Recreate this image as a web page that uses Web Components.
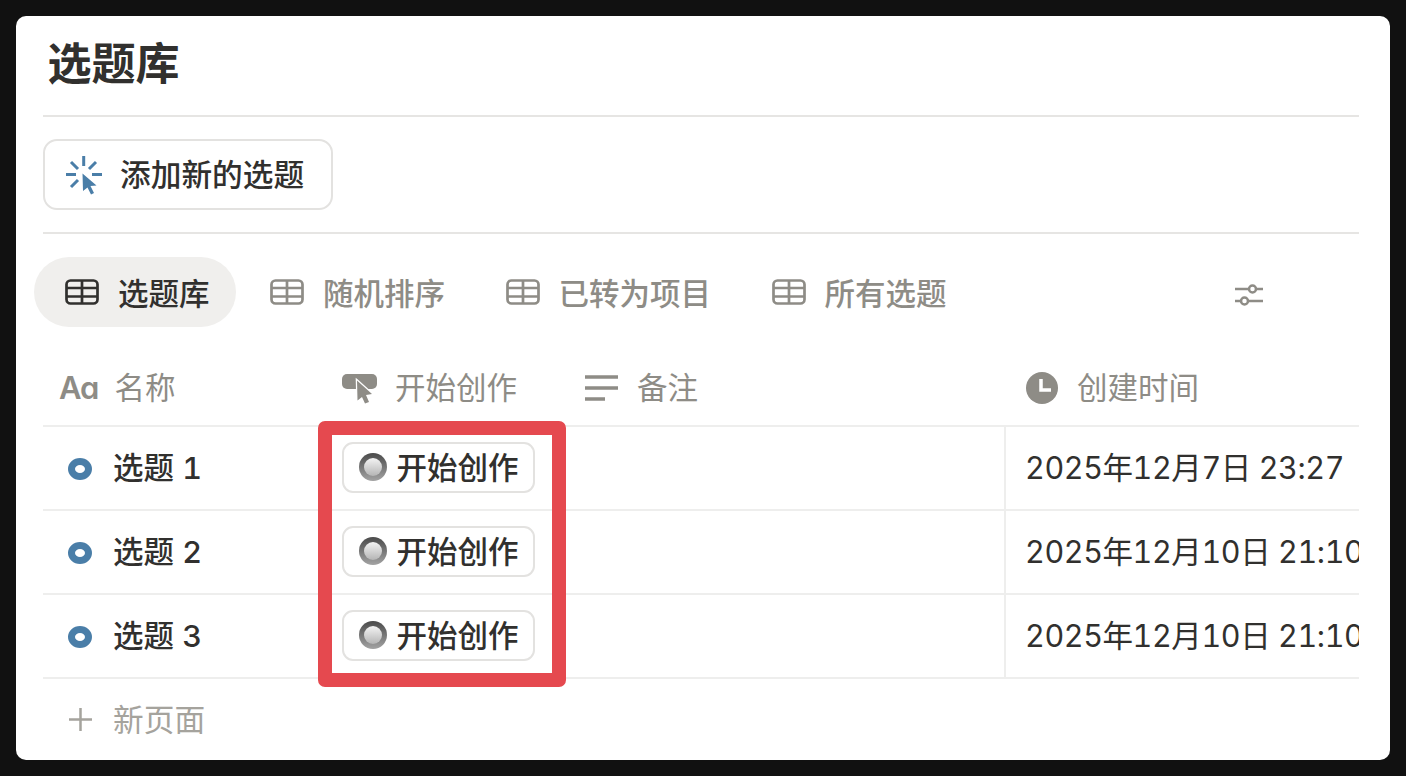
<!DOCTYPE html>
<html lang="zh-CN">
<head>
<meta charset="utf-8">
<title>选题库</title>
<style>
  html, body { margin: 0; height: 100%; background: #111111; }
  body { font-family: "Inter", "Noto Sans CJK SC", sans-serif; color: #31302e; }
</style>
</head>
<body>
<db-card>
  <db-title slot="title">选题库</db-title>
  <db-action slot="action">添加新的选题</db-action>
  <db-tabs slot="tabs"></db-tabs>
  <db-table slot="table"></db-table>
</db-card>

<script>
const GRAY = '#8e8c86';
const BLUE = '#4a7ea8';

const tableIcon = `<svg width="34" height="26" viewBox="0 0 34 26" fill="none" stroke="currentColor" stroke-width="2.700">
  <rect x="1.5" y="1.5" width="31" height="23" rx="4"/><path d="M2 9h30M2 17.500h30M17 2v22"/></svg>`;

class DbCard extends HTMLElement {
  constructor() {
    super();
    this.attachShadow({mode: 'open'});
    this.shadowRoot.innerHTML = `
      <style>
        :host { display: block; padding: 16px; height: 776px; box-sizing: border-box; }
        .card {
          height: 744px;
          box-sizing: border-box;
          background: #fff;
          border-radius: 10px;
          padding: 0 31px 0 27px;
          overflow: hidden;
        }
      </style>
      <div class="card">
        <slot name="title"></slot>
        <slot name="action"></slot>
        <slot name="tabs"></slot>
        <slot name="table"></slot>
      </div>`;
  }
}

class DbTitle extends HTMLElement {
  constructor() {
    super();
    this.attachShadow({mode: 'open'});
    this.shadowRoot.innerHTML = `
      <style>
        :host {
          display: flex;
          align-items: center;
          height: 101px;
          padding: 0 0 9px 4.5px;
          box-sizing: border-box;
          border-bottom: 2px solid #e6e5e3;
          font-size: 44px;
          font-weight: 700;
        }
      </style>
      <slot></slot>`;
  }
}

class DbAction extends HTMLElement {
  constructor() {
    super();
    this.attachShadow({mode: 'open'});
    this.shadowRoot.innerHTML = `
      <style>
        :host {
          display: block;
          padding: 22px 0;
          border-bottom: 2px solid #e6e5e3;
        }
        .btn {
          display: flex;
          align-items: center;
          gap: 17px;
          height: 71px;
          width: 290px;
          box-sizing: border-box;
          padding-left: 20px;
          border: 2px solid #e3e2e0;
          border-radius: 14px;
          font-size: 30.7px;
          font-weight: 500;
        }
        svg { flex: none; }
        .label { margin-bottom: 4px; }
      </style>
      <div class="btn">
        <svg width="38" height="40" viewBox="0 0 38 40" fill="none" stroke="${BLUE}" stroke-width="3">
          <path d="M18.700 1v10M1 19.500h10M27 19.500h10M6 7l7 7M31 7l-7 7M6 32l7-7"/>
          <path d="M17.500 18.500l14 12-6 .5 3.500 7-3 1.500-3.500-7-4.500 3.500z" fill="${BLUE}" stroke="none"/>
        </svg>
        <span class="label"><slot></slot></span>
      </div>`;
  }
}

class DbTabs extends HTMLElement {
  constructor() {
    super();
    const tabs = ['选题库', '随机排序', '已转为项目', '所有选题'];
    this.attachShadow({mode: 'open'});
    this.shadowRoot.innerHTML = `
      <style>
        :host {
          display: flex;
          align-items: center;
          justify-content: space-between;
          margin: 23px 96px 0 -9px;
          height: 70px;
          font-size: 30.5px;
          font-weight: 500;
          color: ${GRAY};
        }
        .list { display: flex; gap: 3.5px; }
        .tab {
          display: flex;
          align-items: center;
          gap: 19px;
          height: 70px;
          padding: 0 26px 0 31px;
          border-radius: 35px;
        }
        .tab.active { background: #f0efed; color: #31302e; }
        .tab span { margin-bottom: 1px; }
        svg { flex: none; }
        .tune { margin-top: 6px; }
      </style>
      <div class="list">
        ${tabs.map((t, i) => `<div class="tab ${i === 0 ? 'active' : ''}">${tableIcon}<span>${t}</span></div>`).join('')}
      </div>
      <svg class="tune" width="28" height="22" viewBox="0 0 28 22" fill="none" stroke="currentColor" stroke-width="2.500">
        <path d="M0 5h13M22 5h6M0 17h5M14 17h14"/><circle cx="17.500" cy="5" r="3.500"/><circle cx="9.500" cy="17" r="3.500"/>
      </svg>`;
  }
}

class DbChip extends HTMLElement {
  constructor() {
    super();
    this.attachShadow({mode: 'open'});
    this.shadowRoot.innerHTML = `
      <style>
        :host {
          display: inline-flex;
          align-items: center;
          gap: 9.5px;
          width: 193px;
          height: 51px;
          margin-bottom: 2px;
          box-sizing: border-box;
          padding-left: 15px;
          border: 2px solid #e3e2e0;
          border-radius: 11px;
          font-size: 30.5px;
          font-weight: 500;
        }
        .radio {
          width: 28px;
          height: 28px;
          flex: none;
          box-sizing: border-box;
          border-radius: 50%;
          border: 5px solid transparent;
          background:
            linear-gradient(#f4f4f4, #b5b5b5) padding-box,
            linear-gradient(#4a4a4a, #a3a3a3) border-box;
        }
        .label { margin-bottom: 3px; }
      </style>
      <span class="radio"></span><span class="label"><slot></slot></span>`;
  }
}

class DbTable extends HTMLElement {
  constructor() {
    super();
    const rows = [
      ['选题 1', '2025年12月7日 23:27'],
      ['选题 2', '2025年12月10日 21:10'],
      ['选题 3', '2025年12月10日 21:10'],
    ];
    this.attachShadow({mode: 'open'});
    this.shadowRoot.innerHTML = `
      <style>
        :host {
          display: block;
          position: relative;
          font-size: 30.5px;
          font-variant-numeric: tabular-nums;
          --cols: 275px 243px 443px 1fr;
        }
        .head, .row {
          display: grid;
          grid-template-columns: var(--cols);
          overflow: hidden;
        }
        .head {
          height: 100px;
          box-sizing: border-box;
          border-bottom: 2px solid #eeeeed;
          color: ${GRAY};
        }
        .hcell { display: flex; align-items: center; padding-top: 24px; gap: 17px; }
        .hcell span { margin-bottom: 4px; }
        .hcell:nth-child(1) { padding-left: 16px; gap: 16px; }
        .hcell:nth-child(2), .hcell:nth-child(3) { padding-left: 24px; }
        .hcell:nth-child(3) { gap: 18px; }
        .hcell:nth-child(4) { padding-left: 22px; gap: 19px; }
        .hcell .aa {
          font-size: 31px;
          font-weight: 600;
          font-feature-settings: "cv11";
          letter-spacing: -1px;
          margin-bottom: 2px;
        }
        .row {
          height: 84px;
          box-sizing: border-box;
          border-bottom: 2px solid #eeeeed;
        }
        .cell { display: flex; align-items: center; min-width: 0; }
        .name { padding-left: 25px; gap: 21px; font-weight: 500; }
        .name .txt, .date .txt { margin-bottom: 4px; }
        .action { padding-left: 24px; }
        .date { padding-left: 19px; border-left: 2px solid #eeeeed; white-space: nowrap; letter-spacing: -.4px; }
        .dot {
          width: 24px;
          height: 22px;
          margin-top: 1px;
          flex: none;
          box-sizing: border-box;
          border: 7px solid ${BLUE};
          border-radius: 50%;
        }
        .add {
          display: flex;
          align-items: center;
          gap: 20px;
          height: 82px;
          padding: 0 0 2px 25px;
          box-sizing: border-box;
          font-size: 30.7px;
          color: #a5a39d;
        }
        .add span { margin-bottom: 3px; }
        .mark {
          position: absolute;
          left: 275px;
          top: 94px;
          width: 248px;
          height: 266px;
          box-sizing: border-box;
          border: 14px solid #e5494f;
          border-radius: 7px;
        }
      </style>
      <div class="head">
        <div class="hcell"><span class="aa">Aa</span><span>名称</span></div>
        <div class="hcell">
          <svg width="36" height="32" viewBox="0 0 36 32"><rect y="2" width="35" height="15" rx="5" fill="${GRAY}"/><path d="M15 8.500l15 13.500-6 1 3 7-4 1.500-3-6.500-4.500 3.500z" fill="${GRAY}" stroke="#fff" stroke-width="2.500" paint-order="stroke"/></svg>
          <span>开始创作</span>
        </div>
        <div class="hcell">
          <svg width="34" height="28" viewBox="0 0 34 28" fill="none" stroke="${GRAY}" stroke-width="3.500"><path d="M0 3h33M0 14h33M0 25h20"/></svg>
          <span>备注</span>
        </div>
        <div class="hcell">
          <svg width="32" height="32" viewBox="0 0 32 32"><circle cx="16" cy="16" r="16" fill="${GRAY}"/><path d="M15 7v11h10" fill="none" stroke="#fff" stroke-width="3.500"/></svg>
          <span>创建时间</span>
        </div>
      </div>
      ${rows.map(r => `
        <div class="row">
          <div class="cell name"><span class="dot"></span><span class="txt">${r[0]}</span></div>
          <div class="cell action"><db-chip>开始创作</db-chip></div>
          <div class="cell"></div>
          <div class="cell date"><span class="txt">${r[1]}</span></div>
        </div>`).join('')}
      <div class="add">
        <svg width="25" height="25" viewBox="0 0 25 25" stroke="#a5a39d" stroke-width="2.500"><path d="M12.500 1v23M1 12.500h23"/></svg>
        <span>新页面</span>
      </div>
      <div class="mark"></div>`;
  }
}

customElements.define('db-card', DbCard);
customElements.define('db-title', DbTitle);
customElements.define('db-action', DbAction);
customElements.define('db-tabs', DbTabs);
customElements.define('db-chip', DbChip);
customElements.define('db-table', DbTable);
</script>
</body>
</html>
